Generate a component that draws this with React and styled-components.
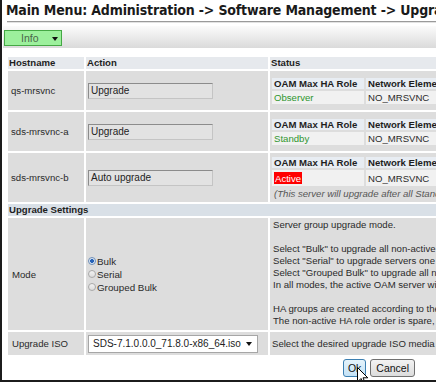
import React from "react";
import styled, { createGlobalStyle } from "styled-components";

const Global = createGlobalStyle`
  html, body { margin: 0; padding: 0; background: #fff; }
  * { box-sizing: border-box; }
  body { font-family: "Liberation Sans", Arial, sans-serif; }
`;

const Frame = styled.div`
  position: relative;
  width: 436px;
  height: 382px;
  overflow: hidden;
  border-left: 2px solid #1c1c1c;
  border-bottom: 2px solid #1c1c1c;
  background: #fff;
`;

const Content = styled.div`
  width: 760px;
`;

const Title = styled.h1`
  margin: 0;
  padding: 2px 0 0 4px;
  height: 21px;
  font-family: "DejaVu Sans Condensed", "DejaVu Sans", sans-serif;
  font-stretch: condensed;
  font-weight: bold;
  font-size: 14px;
  letter-spacing: -0.17px;
  line-height: 17px;
  color: #1a1a1a;
  white-space: nowrap;
`;

const Rule = styled.div`
  margin: 0 0 0 5px;
  height: 2px;
  border-top: 1px solid #9a9a9a;
  border-bottom: 1px solid #e2e2e2;
`;

const Toolbar = styled.div`
  margin: 3px 0 0 1px;
  height: 22px;
  padding: 4px 0 0 1px;
  background: linear-gradient(#fbfbfb, #dadada);
`;

const InfoButton = styled.div`
  width: 58px;
  height: 16px;
  display: flex;
  align-items: center;
  padding-left: 16px;
  gap: 13px;
  background: #9cf09c;
  border: 1px solid #44a844;
  font-size: 10.5px;
  color: #4a664a;
`;

const Caret = styled.span`
  width: 0;
  height: 0;
  border-left: 3.5px solid transparent;
  border-right: 3.5px solid transparent;
  border-top: 4px solid #111;
  margin-top: 1px;
`;

const Table = styled.table`
  margin: 7px 0 0 4px;
  width: 742px;
  table-layout: fixed;
  border-collapse: separate;
  border-spacing: 2px;
  font-size: 9.6px;
  color: #2a2a2a;
`;

const HeadCell = styled.td`
  height: 12px;
  padding: 0 0 0 ${(p) => p.$pad || 1}px;
  background: ${(p) => p.$bg || "#e6e9ed"};
  font-weight: bold;
  color: #1e1e1e;
  line-height: 12px;
  vertical-align: middle;
  white-space: nowrap;
`;

const Cell = styled.td`
  height: ${(p) => p.$h}px;
  padding: ${(p) => p.$pt || 0}px 0 0 ${(p) => p.$pl ?? 2}px;
  background: #dddddd;
  vertical-align: ${(p) => p.$va || "middle"};
  white-space: nowrap;
  overflow: hidden;
`;

const ActionBox = styled.div`
  width: 125px;
  height: 16px;
  padding-left: 2px;
  display: flex;
  align-items: center;
  background: #e2e2e2;
  border: 1px solid;
  border-color: #8c8c8c #c4c4c4 #c4c4c4 #8c8c8c;
  font-size: 10px;
  color: #222;
`;

const SubTable = styled.table`
  border-collapse: separate;
  border-spacing: 2px;
  margin-left: -2px;
  table-layout: fixed;
  width: 330px;
`;

const SubHead = styled.td`
  height: 11px;
  padding: 0 0 0 2px;
  background: #e8edf3;
  font-weight: bold;
  color: #1e1e1e;
  line-height: 11px;
  white-space: nowrap;
  overflow: hidden;
`;

const SubValue = styled.td`
  height: ${(p) => p.$h || 13}px;
  padding: 0 0 0 2px;
  background: #f1f1f1;
  color: ${(p) => p.$color || "#2a2a2a"};
  line-height: 11px;
  white-space: nowrap;
  overflow: hidden;
`;

const ActiveTag = styled.span`
  display: inline-block;
  background: #ff0000;
  color: #fff;
  padding: 1px 1px 0 1px;
  line-height: 11px;
`;

const Note = styled.div`
  font-style: italic;
  color: #555;
  line-height: 12px;
  padding-left: 2px;
`;

const Radios = styled.div`
  display: flex;
  flex-direction: column;
`;

const RadioRow = styled.label`
  display: flex;
  align-items: center;
  height: 13px;
  font-size: 9.8px;
  color: #2a2a2a;
`;

const RadioDot = styled.span`
  width: 8px;
  height: 8px;
  border-radius: 50%;
  margin-right: 1px;
  border: 1px solid ${(p) => (p.$on ? "#6f8fb8" : "#a9a9a9")};
  background: ${(p) =>
    p.$on
      ? "radial-gradient(circle at 50% 50%, #2763b8 0 1.8px, #dfe9f5 2.2px)"
      : "linear-gradient(#f2f2f2, #dcdcdc)"};
`;

const Desc = styled.div`
  line-height: 12px;
  padding-left: 1px;
`;

const Select = styled.div`
  width: 170px;
  height: 18px;
  display: flex;
  align-items: center;
  justify-content: space-between;
  padding: 0 5px 0 4px;
  background: #fff;
  border: 1px solid #a6a6a6;
  font-size: 10px;
  color: #222;
`;

const Buttons = styled.div`
  display: flex;
  justify-content: center;
  gap: 4px;
  margin-top: 2px;
  width: 754px;
`;

const Btn = styled.div`
  height: 18px;
  padding: 0 ${(p) => (p.$primary ? 4 : 5)}px;
  display: flex;
  align-items: center;
  border-radius: 3px;
  font-size: 10.5px;
  color: #111;
  border: 1px solid ${(p) => (p.$primary ? "#3c7fb1" : "#707070")};
  background: ${(p) =>
    p.$primary
      ? "linear-gradient(#e5f3fb, #c4e2f6)"
      : "linear-gradient(#f3f3f3, #dcdcdc)"};
`;

const Cursor = styled.svg`
  position: absolute;
  left: 355px;
  top: 367px;
`;

const servers = [
  { host: "qs-mrsvnc", action: "Upgrade", role: "Observer" },
  { host: "sds-mrsvnc-a", action: "Upgrade", role: "Standby" },
  { host: "sds-mrsvnc-b", action: "Auto upgrade", role: "Active" },
];

export default function App() {
  return (
    <>
      <Global />
      <Frame>
        <Content>
          <Title>Main Menu: Administration -&gt; Software Management -&gt; Upgrade</Title>
          <Rule />
          <Toolbar>
            <InfoButton>
              Info <Caret />
            </InfoButton>
          </Toolbar>
          <Table>
            <colgroup>
              <col style={{ width: 76 }} />
              <col style={{ width: 182 }} />
              <col />
            </colgroup>
            <tbody>
              <tr>
                <HeadCell>Hostname</HeadCell>
                <HeadCell>Action</HeadCell>
                <HeadCell>Status</HeadCell>
              </tr>
              {servers.map((s) => {
                const active = s.role === "Active";
                return (
                  <tr key={s.host}>
                    <Cell $h={active ? 49 : 39} $pl={3}>{s.host}</Cell>
                    <Cell $h={active ? 49 : 39}>
                      <ActionBox>{s.action}</ActionBox>
                    </Cell>
                    <Cell $h={active ? 49 : 39} $pl={2}>
                      <SubTable>
                        <colgroup>
                          <col style={{ width: 92 }} />
                          <col style={{ width: 110 }} />
                          <col />
                        </colgroup>
                        <tbody>
                          <tr>
                            <SubHead>OAM Max HA Role</SubHead>
                            <SubHead>Network Element</SubHead>
                            <SubHead>Upgrade Status</SubHead>
                          </tr>
                          <tr>
                            <SubValue $h={active ? 16 : 13} $color={active ? "#fff" : "#2f962f"}>
                              {active ? <ActiveTag>Active</ActiveTag> : s.role}
                            </SubValue>
                            <SubValue $h={active ? 16 : 13}>NO_MRSVNC</SubValue>
                            <SubValue $h={active ? 16 : 13}>Ready</SubValue>
                          </tr>
                        </tbody>
                      </SubTable>
                      {active && (
                        <Note>(This server will upgrade after all Standby servers are upgraded)</Note>
                      )}
                    </Cell>
                  </tr>
                );
              })}
              <tr>
                <HeadCell colSpan={3} $bg="#d9e0e7">Upgrade Settings</HeadCell>
              </tr>
              <tr>
                <Cell $h={112} $pl={4}>Mode</Cell>
                <Cell $h={112}>
                  <Radios>
                    <RadioRow><RadioDot $on />Bulk</RadioRow>
                    <RadioRow><RadioDot />Serial</RadioRow>
                    <RadioRow><RadioDot />Grouped Bulk</RadioRow>
                  </Radios>
                </Cell>
                <Cell $h={112} $va="top" $pt={1} $pl={2}>
                  <Desc>
                    Server group upgrade mode.
                    <br />
                    <br />
                    Select "Bulk" to upgrade all non-active servers in parallel.
                    <br />
                    Select "Serial" to upgrade servers one at a time.
                    <br />
                    Select "Grouped Bulk" to upgrade all non-active servers in HA groups.
                    <br />
                    In all modes, the active OAM server will be upgraded last.
                    <br />
                    <br />
                    HA groups are created according to the HA role of each server.
                    <br />
                    The non-active HA role order is spare, then standby.
                  </Desc>
                </Cell>
              </tr>
              <tr>
                <Cell $h={23} $pl={4}>Upgrade ISO</Cell>
                <Cell $h={23}>
                  <Select>
                    SDS-7.1.0.0.0_71.8.0-x86_64.iso <Caret />
                  </Select>
                </Cell>
                <Cell $h={23} $pl={2}>Select the desired upgrade ISO media file.</Cell>
              </tr>
            </tbody>
          </Table>
          <Buttons>
            <Btn $primary>Ok</Btn>
            <Btn>Cancel</Btn>
          </Buttons>
        </Content>
        <Cursor width="12" height="19" viewBox="0 0 12 19">
          <path d="M0.5 0.5 L0.5 15 L4 11.5 L6.5 17.5 L8.5 16.6 L6 10.8 L10.8 10.8 Z" fill="#fff" stroke="#000" strokeWidth="1" />
        </Cursor>
      </Frame>
    </>
  );
}
